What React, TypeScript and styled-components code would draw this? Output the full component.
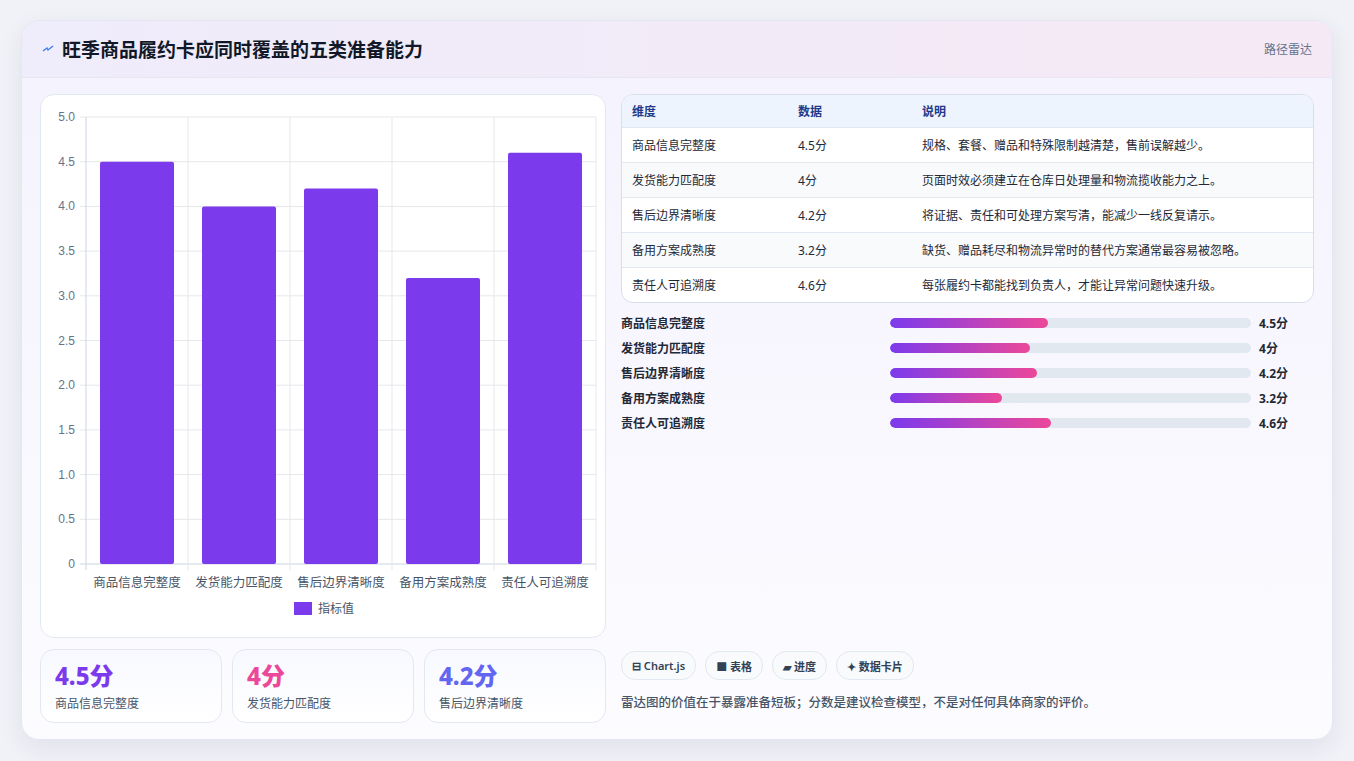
import styled, { createGlobalStyle } from 'styled-components';

const GlobalStyle = createGlobalStyle`
  html, body { margin: 0; padding: 0; background: #f1f2f7; }
  body { font-family: "Noto Sans", "Noto Sans CJK SC", sans-serif; color: #1e293b; }
`;

const rows = [
  { name: '商品信息完整度', value: 4.5, note: '规格、套餐、赠品和特殊限制越清楚，售前误解越少。' },
  { name: '发货能力匹配度', value: 4, note: '页面时效必须建立在仓库日处理量和物流揽收能力之上。' },
  { name: '售后边界清晰度', value: 4.2, note: '将证据、责任和可处理方案写清，能减少一线反复请示。' },
  { name: '备用方案成熟度', value: 3.2, note: '缺货、赠品耗尽和物流异常时的替代方案通常最容易被忽略。' },
  { name: '责任人可追溯度', value: 4.6, note: '每张履约卡都能找到负责人，才能让异常问题快速升级。' },
];

const Page = styled.div`
  padding: 20px 21px 21px 21px;
`;

const Card = styled.div`
  width: 1312px;
  height: 720px;
  box-sizing: border-box;
  border-radius: 18px;
  border: 1px solid #e4e6f2;
  background: linear-gradient(180deg, #f4f2fd 0%, #fcfcff 100%);
  box-shadow: 0 8px 24px rgba(30, 40, 90, 0.08);
  overflow: hidden;
  display: flex;
  flex-direction: column;
`;

const Header = styled.div`
  height: 56px;
  flex: none;
  display: flex;
  align-items: center;
  justify-content: space-between;
  padding: 0 20px 0 20px;
  background: linear-gradient(90deg, #efecfb 0%, #f5e9f5 100%);
  border-bottom: 1px solid #e8e6f2;
`;

const Title = styled.h1`
  margin: 0;
  font-size: 19px;
  font-weight: 700;
  color: #111827;
  display: flex;
  align-items: center;
  gap: 8px;
`;

const Tag = styled.span`
  font-size: 12px;
  color: #64748b;
`;

const Body = styled.div`
  flex: 1;
  display: grid;
  grid-template-columns: 566px 1fr;
  gap: 15px;
  padding: 16px 18px 18px 18px;
  min-height: 0;
`;

const LeftCol = styled.div`
  display: flex;
  flex-direction: column;
  gap: 11px;
`;

const ChartPanel = styled.div`
  height: 544px;
  box-sizing: border-box;
  border: 1px solid #e2e8f0;
  border-radius: 14px;
  background: #fff;
`;

const Stats = styled.div`
  display: grid;
  grid-template-columns: repeat(3, 1fr);
  gap: 10px;
`;

const Stat = styled.div`
  height: 74px;
  box-sizing: border-box;
  border: 1px solid #e2e8f0;
  border-radius: 14px;
  background: linear-gradient(180deg, #f8f9ff, #fff);
  padding: 10px 14px;
`;

const StatValue = styled.div<{ $color: string }>`
  font-size: 24px;
  font-weight: 800;
  line-height: 32px;
  color: ${p => p.$color};
`;

const StatLabel = styled.div`
  font-size: 12px;
  color: #475569;
  margin-top: 2px;
`;

const RightCol = styled.div`
  display: flex;
  flex-direction: column;
`;

const TableBox = styled.div`
  border: 1px solid #d9dfea;
  border-radius: 12px;
  overflow: hidden;
  background: #fff;
`;

const Table = styled.table`
  width: 100%;
  border-collapse: collapse;
  font-size: 12px;
  td, th { text-align: left; padding: 0 10px; height: 34px; border-bottom: 1px solid #e2e8f0; }
  tr:last-child td { border-bottom: none; }
  th { background: #eef4fd; color: #1e3a8a; font-weight: 600; height: 32px; }
  td { color: #1f2937; }
  tbody tr:nth-child(even) td { background: #f8fafc; }
`;

const Bars = styled.div`
  margin-top: 11px;
  display: flex;
  flex-direction: column;
  gap: 7px;
`;

const BarRow = styled.div`
  display: grid;
  grid-template-columns: 261px 361px 1fr;
  align-items: center;
  column-gap: 8px;
  height: 18px;
  font-size: 12px;
  font-weight: 600;
  color: #1f2937;
`;

const Track = styled.div`
  height: 10px;
  border-radius: 5px;
  background: #e2e8f0;
  overflow: hidden;
  margin-left: 0;
`;

const Fill = styled.div`
  height: 100%;
  border-radius: 5px;
  background: linear-gradient(90deg, #7c3aed, #ec4899);
`;

const BarValue = styled.span`
  font-weight: 700;
  margin-left: 0;
`;

const Spacer = styled.div`
  flex: 1;
`;

const Chips = styled.div`
  display: flex;
  gap: 9px;
`;

const Chip = styled.span`
  height: 27px;
  padding: 0 10px;
  border: 1px solid #e2e8f0;
  border-radius: 14px;
  background: #f8fafc;
  font-size: 11px;
  font-weight: 600;
  color: #334155;
  display: inline-flex;
  align-items: center;
  gap: 4px;
`;

const Footnote = styled.p`
  margin: 12px 0 12px;
  font-size: 12.5px;
  color: #475569;
  font-weight: 500;
`;

function BarChart() {
  const x0 = 45, x1 = 555, y0 = 22, y1 = 469;
  const h = y1 - y0;
  const cw = (x1 - x0) / 5;
  const ticks = Array.from({ length: 11 }, (_, i) => i * 0.5);
  return (
    <svg width="564" height="542" viewBox="0 0 564 542" style={{ display: 'block' }}>
      {ticks.map(t => {
        const y = y1 - (t / 5) * h;
        return (
          <g key={t}>
            <line x1={x0 - 6} x2={x1} y1={y} y2={y} stroke={t === 0 ? '#cbd5e1' : '#e5e7eb'} />
            <text x={x0 - 11} y={y + 4} fontSize="12" fill="#64748b" textAnchor="end" fontFamily="Liberation Sans, sans-serif">
              {t === 0 ? '0' : t.toFixed(1)}
            </text>
          </g>
        );
      })}
      {Array.from({ length: 6 }, (_, i) => (
        <line key={i} x1={x0 + i * cw} x2={x0 + i * cw} y1={y0} y2={y1 + 6} stroke={i === 0 ? '#cbd5e1' : '#e5e7eb'} />
      ))}
      {rows.map((r, i) => {
        const bh = (r.value / 5) * h;
        return (
          <g key={r.name}>
            <rect x={x0 + i * cw + 14} y={y1 - bh} width={cw - 28} height={bh} fill="#7c3aed" rx="2" />
            <text x={x0 + i * cw + cw / 2} y={y1 + 23} fontSize="12.5" fill="#475569" textAnchor="middle">{r.name}</text>
          </g>
        );
      })}
      <rect x="253" y="507" width="18" height="13" fill="#7c3aed" />
      <text x="277" y="518" fontSize="12" fill="#475569">指标值</text>
    </svg>
  );
}

export default function App() {
  const colors = ['#7c3aed', '#ec4899', '#6366f1'];
  return (
    <Page>
      <GlobalStyle />
      <Card>
        <Header>
          <Title>
            <svg width="12" height="8" viewBox="0 0 12 8"><path d="M1 6 L5 3 L6 5 L11 1" stroke="#3b82f6" strokeWidth="1.4" fill="none" /></svg>
            旺季商品履约卡应同时覆盖的五类准备能力
          </Title>
          <Tag>路径雷达</Tag>
        </Header>
        <Body>
          <LeftCol>
            <ChartPanel><BarChart /></ChartPanel>
            <Stats>
              {rows.slice(0, 3).map((r, i) => (
                <Stat key={r.name}>
                  <StatValue $color={colors[i]}>{r.value}分</StatValue>
                  <StatLabel>{r.name}</StatLabel>
                </Stat>
              ))}
            </Stats>
          </LeftCol>
          <RightCol>
            <TableBox>
              <Table>
                <colgroup>
                  <col style={{ width: 166 }} />
                  <col style={{ width: 124 }} />
                  <col />
                </colgroup>
                <thead>
                  <tr><th>维度</th><th>数据</th><th>说明</th></tr>
                </thead>
                <tbody>
                  {rows.map(r => (
                    <tr key={r.name}><td>{r.name}</td><td>{r.value}分</td><td>{r.note}</td></tr>
                  ))}
                </tbody>
              </Table>
            </TableBox>
            <Bars>
              {rows.map(r => (
                <BarRow key={r.name}>
                  <span>{r.name}</span>
                  <Track><Fill style={{ width: `${r.value * 10 * 0.97}%` }} /></Track>
                  <BarValue>{r.value}分</BarValue>
                </BarRow>
              ))}
            </Bars>
            <Spacer />
            <Chips>
              <Chip>⊟ Chart.js</Chip>
              <Chip>■ 表格</Chip>
              <Chip>▰ 进度</Chip>
              <Chip>✦ 数据卡片</Chip>
            </Chips>
            <Footnote>雷达图的价值在于暴露准备短板；分数是建议检查模型，不是对任何具体商家的评价。</Footnote>
          </RightCol>
        </Body>
      </Card>
    </Page>
  );
}
